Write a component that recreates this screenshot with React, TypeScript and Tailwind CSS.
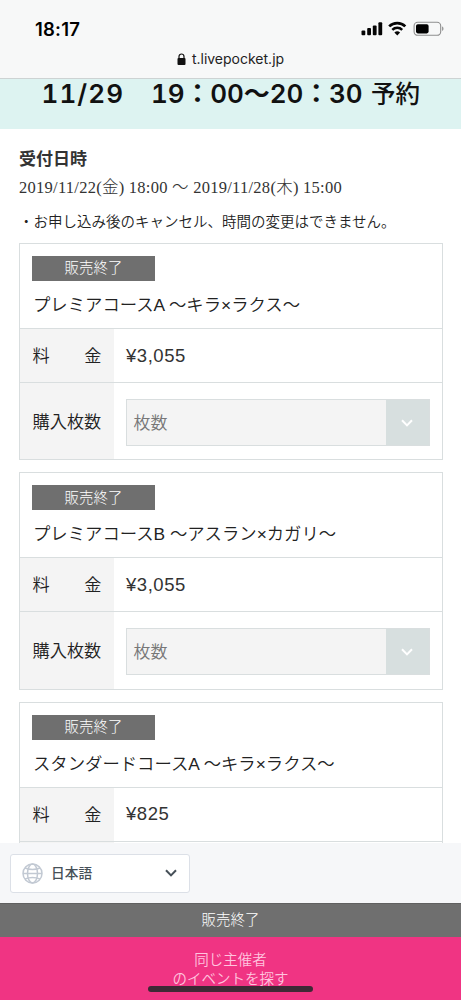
import React from "react";

const JP = "font-['Noto_Sans_CJK_JP',sans-serif]";

function StatusIcons() {
  return (
    <svg width="84" height="18" viewBox="0 0 84 18" className="block">
      <g fill="#050505">
        <rect x="1.5" y="10.5" width="3.8" height="4.8" rx="1" />
        <rect x="7.2" y="8" width="3.8" height="7.3" rx="1" />
        <rect x="12.8" y="5.4" width="3.8" height="9.9" rx="1" />
        <rect x="18.4" y="2.3" width="3.8" height="13" rx="1" />
      </g>
      <g fill="none" stroke="#050505">
        <path d="M29.2 6.4a11.4 11.4 0 0 1 16.1 0" strokeWidth="2.7" />
        <path d="M32.3 9.8a7 7 0 0 1 9.9 0" strokeWidth="2.5" />
      </g>
      <path d="M34.4 12.6a4.2 4.2 0 0 1 5.7 0L37.3 15.4z" fill="#050505" />
      <rect x="54.1" y="2.3" width="26.6" height="13" rx="3.6" fill="none" stroke="#8e8e8e" strokeWidth="1.1" />
      <rect x="56" y="4.2" width="12.6" height="9.2" rx="1.8" fill="#000" />
      <path d="M82 6.6c2 .5 2 3.9 0 4.4z" fill="#9a9a9a" />
    </svg>
  );
}

function Chevron({ className }: { className?: string }) {
  return (
    <svg width="12" height="8" viewBox="0 0 12 8" className={className}>
      <path d="M1 1.2L6 6.4L11 1.2" fill="none" stroke="currentColor" strokeWidth="2" />
    </svg>
  );
}

function Ticket({ name, price, quantity = true }: { name: string; price: string; quantity?: boolean }) {
  return (
    <section className="mb-3 flex h-[217.3px] shrink-0 flex-col border border-[#d9dedf] bg-white">
      <div className="h-[85px] shrink-0 border-b border-[#d9dedf] pl-3 pt-3">
        <div className="flex h-[25px] w-[123px] items-center justify-center bg-[#6f6f6f] text-[14.5px] font-light leading-none text-white">
          <span className="relative -top-px">販売終了</span>
        </div>
        <h3 className="mt-[10px] whitespace-nowrap pl-px font-['Liberation_Sans','Noto_Sans_CJK_JP',sans-serif] text-[17.35px] font-[350] leading-[28px]">
          {name}
        </h3>
      </div>
      <div className="flex h-[54px] shrink-0 border-b border-[#d9dedf]">
        <div className="flex w-[94px] items-center justify-between bg-[#f4f4f4] pb-px pl-[12.5px] pr-[12.5px] text-[17.2px] font-[350]">
          <span>料</span>
          <span>金</span>
        </div>
        <div className="flex items-center pl-3 font-['Liberation_Sans',sans-serif] text-[18.5px] tracking-[0.55px] text-[#333]">
          {price}
        </div>
      </div>
      <div className="flex min-h-0 flex-1">
        <div className="flex w-[94px] items-center whitespace-nowrap bg-[#f4f4f4] pb-px pl-[12.5px] text-[17.2px] font-[350]">
          {quantity && "購入枚数"}
        </div>
        {quantity && (
          <div className="flex flex-1 items-center pl-[11.5px] pr-[12.5px] pt-[3px]">
            <div className="flex h-[47px] flex-1 border border-[#d9dedf] bg-[#f4f4f4]">
              <span className="flex flex-1 items-center pb-0.5 pl-[7px] text-[17px] font-[350] text-[#777]">枚数</span>
              <span className="flex w-[43px] items-center justify-center bg-[#d7dfdf] text-white">
                <Chevron />
              </span>
            </div>
          </div>
        )}
      </div>
    </section>
  );
}

export default function App() {
  return (
    <div className={`flex h-[1000px] w-[461px] flex-col overflow-hidden bg-white text-[#222] ${JP}`}>
      <header className="flex h-[78.5px] shrink-0 flex-col border-b border-[#cdd3d3] bg-[#f7f8f8] font-['Inter',sans-serif]">
        <div className="flex h-[48px] items-start justify-between pl-[35px] pr-[17px] pt-5 text-black">
          <span className="text-[18.5px] font-semibold leading-[18px] tracking-[0.2px]">18:17</span>
          <StatusIcons />
        </div>
        <div className="flex items-center justify-center gap-[6px] text-[14px] leading-[21px] text-[#222]">
          <svg width="9" height="12" viewBox="0 0 9 12">
            <rect x="0.5" y="5" width="8" height="7" rx="1" fill="#111" />
            <path d="M2 5.5V3.5a2.5 2.5 0 0 1 5 0v2" fill="none" stroke="#111" strokeWidth="1.2" />
          </svg>
          <span>t.livepocket.jp</span>
        </div>
      </header>
      <div className="h-[50.5px] shrink-0 bg-[#ddf3f1]">
        <h1 className="flex items-baseline whitespace-pre pl-[41.5px] font-['Inter','Noto_Sans_CJK_JP',sans-serif] text-[26px] font-semibold leading-[30px] tabular-nums text-[#111]">
          <span className="w-[109.5px] tracking-[1.1px]">11/29　</span>
          <span className="w-[220px] tracking-[-0.1px]">19：00〜20：30 </span>
          <span className="text-[24.5px] font-medium">予約</span>
        </h1>
      </div>
      <main className="flex min-h-0 flex-1 flex-col overflow-hidden pl-[19px] pr-[18px]">
        <h2 className="mt-[17px] text-[17px] font-bold leading-6 text-[#333]">受付日時</h2>
        <p className="mt-[5.5px] whitespace-nowrap font-['Liberation_Serif','Noto_Sans_CJK_JP',serif] text-[16.5px] font-light leading-6 tracking-[0.26px] text-[#333]">
          2019/11/22(金) 18:00 〜 2019/11/28(木) 15:00
        </p>
        <p className="mb-[10.5px] mt-[9px] whitespace-nowrap text-[14.5px] font-[350] leading-6">
          ・お申し込み後のキャンセル、時間の変更はできません。
        </p>
        <Ticket name="プレミアコースA 〜キラ×ラクス〜" price="¥3,055" />
        <Ticket name="プレミアコースB 〜アスラン×カガリ〜" price="¥3,055" />
        <Ticket name="スタンダードコースA 〜キラ×ラクス〜" price="¥825" quantity={false} />
      </main>
      <div className="flex h-[60px] shrink-0 items-center bg-[#f6f7f9] pl-[10px]">
        <div className="flex h-[39px] w-[180px] items-center rounded-[3px] border border-[#dce0e7] bg-white pl-[11px] pr-[12px]">
          <svg width="21" height="21" viewBox="0 0 21 21" fill="none" stroke="#c2c9d3" strokeWidth="1.5">
            <circle cx="10.5" cy="10.5" r="9.5" />
            <ellipse cx="10.5" cy="10.5" rx="5" ry="9.5" />
            <path d="M3 5q7.5 3 15 0M3 16q7.5-3 15 0M1 10.5h19" />
          </svg>
          <span className="ml-2 flex-1 pb-px text-[13.7px] font-medium text-[#465058]">日本語</span>
          <Chevron className="text-[#465058]" />
        </div>
      </div>
      <div className="flex h-[34px] shrink-0 items-center justify-center border-t border-[#606060] bg-[#6f6f6f] pb-[3px] text-[14.5px] font-light text-white">
        販売終了
      </div>
      <footer className="relative h-[63px] shrink-0 bg-[#f03483] pt-[11.5px] text-center text-[14.5px] font-[350] leading-[19.5px] text-[#ffc4df]">
        <p>同じ主催者</p>
        <p>のイベントを探す</p>
        <div className="absolute left-[148px] top-[49px] h-[6px] w-[165px] rounded-full bg-[#3e2935]" />
      </footer>
    </div>
  );
}
